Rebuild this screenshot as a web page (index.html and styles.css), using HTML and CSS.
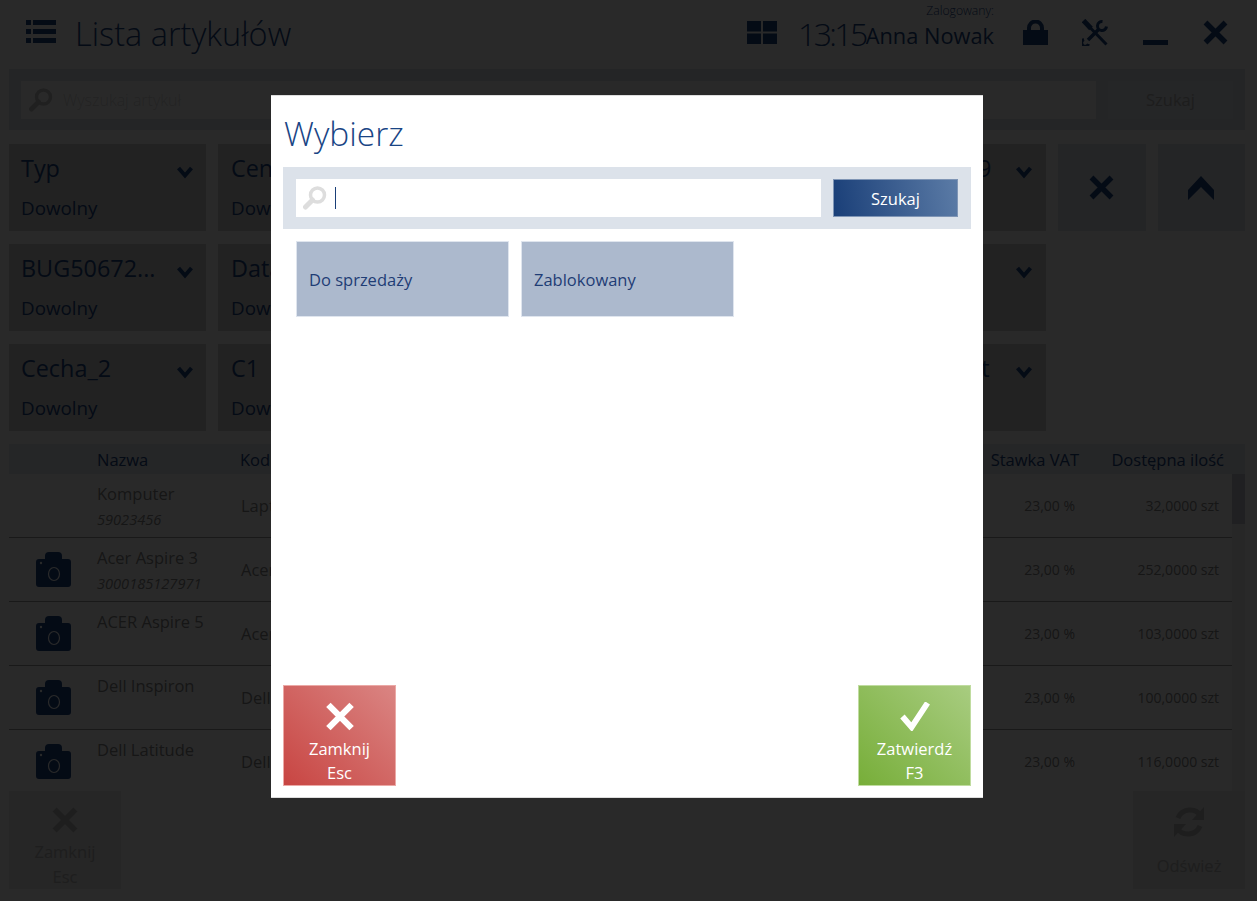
FILE: index.html
```html
<!DOCTYPE html>
<html lang="pl">
  <head>
    <meta charset="UTF-8" />
    <title>Lista artykułów</title>
    <link rel="stylesheet" href="styles.css">
  </head>
  <body>
    <svg class="defs" width="0" height="0">
      <symbol id="i-chevron" viewBox="0 0 16 13"><path d="M1.5 2 8 9.500 14.500 2" fill="none" stroke="currentColor" stroke-width="4"/></symbol>
      <symbol id="i-close" viewBox="0 0 30 30"><path d="M3 3 27 27M27 3 3 27" fill="none" stroke="currentColor" stroke-width="6.500"/></symbol>
      <symbol id="i-camera" viewBox="0 0 35 35"><path fill="currentColor" fill-rule="evenodd" d="M9 7V4a4 4 0 0 1 4-4h9a4 4 0 0 1 4 4v3h6a3 3 0 0 1 3 3v22a3 3 0 0 1-3 3H3a3 3 0 0 1-3-3V10a3 3 0 0 1 3-3Z"/><ellipse cx="18" cy="22" rx="5.500" ry="6.500" fill="none" stroke="#fff" stroke-width="1.200"/><circle cx="5" cy="11" r="1.200" fill="#fff"/></symbol>
    </svg>

    <div class="app">
      <header class="topbar">
        <svg class="menu-icon" width="30" height="23" viewBox="0 0 30 23"><path fill="currentColor" d="M0 0h5v5H0zM7 0h23v5H7zM0 9h5v5H0zM7 9h23v5H7zM0 18h5v5H0zM7 18h23v5H7z"/></svg>
        <h1 class="page-title">Lista artykułów</h1>
        <svg class="grid-icon" width="30" height="23" viewBox="0 0 30 23"><path fill="currentColor" d="M0 0h14v10.500H0zM16 0h14v10.500H16zM0 12.500h14V23H0zM16 12.500h14V23H16z"/></svg>
        <div class="clock">13:15</div>
        <div class="user">
          <span class="user-label">Zalogowany:</span>
          <span class="user-name">Anna Nowak</span>
        </div>
        <svg class="lock-icon" width="25" height="25" viewBox="0 0 25 25"><path fill="currentColor" fill-rule="evenodd" d="M4 10V8a8.500 8.500 0 0 1 17 0v2h4v15H0V10Zm4 0h9V8a4.500 4.500 0 0 0-9 0Z"/></svg>
        <svg class="tools-icon" width="26" height="27" viewBox="0 0 26 27"><path fill="none" stroke="currentColor" stroke-width="5" d="M1.500 1.500 9 9.500"/><path fill="none" stroke="currentColor" stroke-width="3" d="M8 8.500 24.500 25.500"/><path fill="none" stroke="currentColor" stroke-width="3.500" d="M17 10 6 21"/><path fill="none" stroke="currentColor" stroke-width="3" d="M20.500 2.500A4.500 4.500 0 1 0 24.500 7.500M6.500 25A3.500 3.500 0 1 1 2 20.500"/></svg>
        <span class="minimize-icon"></span>
        <svg class="close-icon" width="25" height="25"><use href="#i-close"/></svg>
      </header>

      <div class="searchbar">
        <div class="searchbar-input">
          <svg class="search-icon" width="24" height="24" viewBox="0 0 24 24"><circle cx="14.500" cy="9" r="7" fill="none" stroke="currentColor" stroke-width="3.500"/><path d="M9.500 14 2.500 21" stroke="currentColor" stroke-width="5" stroke-linecap="round"/></svg>
          <span>Wyszukaj artykuł</span>
        </div>
        <div class="searchbar-button">Szukaj</div>
      </div>

      <div class="filters">
        <div class="filter-grid">
          <div class="filter"><span class="filter-name">Typ</span><svg class="chevron"><use href="#i-chevron"/></svg><span class="filter-value">Dowolny</span></div>
          <div class="filter"><span class="filter-name">Cena</span><svg class="chevron"><use href="#i-chevron"/></svg><span class="filter-value">Dowolny</span></div>
          <div class="filter"></div>
          <div class="filter"></div>
          <div class="filter"><span class="filter-name">Atrybut_109</span><svg class="chevron"><use href="#i-chevron"/></svg></div>
          <div class="filter"><span class="filter-name">BUG50672...</span><svg class="chevron"><use href="#i-chevron"/></svg><span class="filter-value">Dowolny</span></div>
          <div class="filter"><span class="filter-name">Data</span><svg class="chevron"><use href="#i-chevron"/></svg><span class="filter-value">Dowolny</span></div>
          <div class="filter"></div>
          <div class="filter"></div>
          <div class="filter"><svg class="chevron"><use href="#i-chevron"/></svg></div>
          <div class="filter"><span class="filter-name">Cecha_2</span><svg class="chevron"><use href="#i-chevron"/></svg><span class="filter-value">Dowolny</span></div>
          <div class="filter"><span class="filter-name">C1</span><svg class="chevron"><use href="#i-chevron"/></svg><span class="filter-value">Dowolny</span></div>
          <div class="filter"></div>
          <div class="filter"></div>
          <div class="filter"><span class="filter-name">Cecha_tekst</span><svg class="chevron"><use href="#i-chevron"/></svg></div>
        </div>
        <div class="filter-actions">
          <div class="filter-action"><svg width="25" height="25"><use href="#i-close"/></svg></div>
          <div class="filter-action"><svg width="26" height="24" viewBox="0 0 26 24"><path fill="currentColor" d="M13 0 26 14v10L13 11 0 24V14Z"/></svg></div>
        </div>
      </div>

      <div class="table-head">
        <span></span>
        <span>Nazwa</span>
        <span>Kod</span>
        <span class="num">Stawka VAT</span>
        <span class="num">Dostępna ilość</span>
      </div>
      <div class="table-body">
        <div class="rows">
          <div class="row">
            <span></span>
            <div class="row-name">Komputer<em>59023456</em></div>
            <span class="row-code">Laptopy</span>
            <span class="row-cell num">23,00 %</span>
            <span class="row-cell num">32,0000 szt</span>
          </div>
          <div class="row">
            <svg class="thumb"><use href="#i-camera"/></svg>
            <div class="row-name">Acer Aspire 3<em>3000185127971</em></div>
            <span class="row-code">Acer</span>
            <span class="row-cell num">23,00 %</span>
            <span class="row-cell num">252,0000 szt</span>
          </div>
          <div class="row">
            <svg class="thumb"><use href="#i-camera"/></svg>
            <div class="row-name">ACER Aspire 5</div>
            <span class="row-code">Acer</span>
            <span class="row-cell num">23,00 %</span>
            <span class="row-cell num">103,0000 szt</span>
          </div>
          <div class="row">
            <svg class="thumb"><use href="#i-camera"/></svg>
            <div class="row-name">Dell Inspiron</div>
            <span class="row-code">Dell</span>
            <span class="row-cell num">23,00 %</span>
            <span class="row-cell num">100,0000 szt</span>
          </div>
          <div class="row">
            <svg class="thumb"><use href="#i-camera"/></svg>
            <div class="row-name">Dell Latitude</div>
            <span class="row-code">Dell</span>
            <span class="row-cell num">23,00 %</span>
            <span class="row-cell num">116,0000 szt</span>
          </div>
        </div>
        <div class="scroll-track"><div class="scroll-thumb"></div></div>
      </div>

      <footer class="footer">
        <div class="page-button">
          <svg width="30" height="30"><use href="#i-close"/></svg>
          <span>Zamknij</span>
          <span>Esc</span>
        </div>
        <div class="page-button">
          <svg class="refresh-icon" width="30" height="30" viewBox="0 0 30 30"><path fill="none" stroke="currentColor" stroke-width="5" d="M27 9A13 13 0 0 0 4 11M3 21a13 13 0 0 0 23-2"/><path fill="currentColor" d="M30 0v13H18ZM0 30V17h12Z"/></svg>
          <span>Odśwież</span>
        </div>
      </footer>
    </div>

    <div class="overlay"></div>

    <div class="dialog">
      <h2 class="dialog-title">Wybierz</h2>
      <div class="dialog-search">
        <div class="dialog-input">
          <svg class="search-icon" width="24" height="24" viewBox="0 0 24 24"><circle cx="14.500" cy="9" r="7" fill="none" stroke="currentColor" stroke-width="3.500"/><path d="M9.500 14 2.500 21" stroke="currentColor" stroke-width="5" stroke-linecap="round"/></svg>
          <span class="caret"></span>
        </div>
        <button class="dialog-search-button">Szukaj</button>
      </div>
      <div class="options">
        <div class="option">Do sprzedaży</div>
        <div class="option">Zablokowany</div>
      </div>
      <div class="dialog-footer">
        <button class="action action-cancel">
          <svg width="30" height="30"><use href="#i-close"/></svg>
          <span>Zamknij</span>
          <span>Esc</span>
        </button>
        <button class="action action-ok">
          <svg width="30" height="30" viewBox="0 0 30 30"><path fill="none" stroke="currentColor" stroke-width="6" d="M2 15 11.500 26 28 1"/></svg>
          <span>Zatwierdź</span>
          <span>F3</span>
        </button>
      </div>
    </div>
  </body>
</html>
```

FILE: styles.css
```css
* {
  box-sizing: border-box;
}
html,
body {
  margin: 0;
  height: 901px;
  overflow: hidden;
}
body {
  font-family: "Open Sans", "Noto Sans", sans-serif;
  color: #1a4585;
  background: #fff;
}
.defs {
  display: block;
  height: 0;
}
.app {
  width: 1257px;
  height: 901px;
  padding: 0 12px 0 9px;
}

/* top bar */
.topbar {
  height: 69px;
  display: flex;
  align-items: center;
}
.menu-icon {
  margin: -6px 0 0 17px;
}
.page-title {
  margin: -2px 0 0 19px;
  width: 216px;
  font-size: 32.500px;
  font-weight: 300;
  white-space: nowrap;
}
.grid-icon {
  margin: -5px 0 0 456px;
}
.clock {
  margin: -2px 0 0 21px;
  font-size: 32px;
  font-weight: 300;
  letter-spacing: -2.600px;
  width: 69px;
  white-space: nowrap;
}
.user {
  display: flex;
  flex-direction: column;
  align-items: flex-end;
  width: 127px;
  margin-top: -14px;
}
.user-label {
  font-size: 12.200px;
  font-weight: 300;
  line-height: 14px;
  margin-bottom: 3px;
}
.user-name {
  font-size: 21.800px;
  line-height: 30px;
  white-space: nowrap;
}
.lock-icon {
  margin: -5px 0 0 29px;
}
.tools-icon {
  margin: -5px 0 0 34px;
}
.minimize-icon {
  width: 25px;
  height: 5px;
  background: currentColor;
  margin: 16px 0 0 35px;
}
.close-icon {
  margin: -5px 0 0 35px;
}

/* article search */
.searchbar {
  height: 61px;
  background: #dce2ea;
  display: flex;
  align-items: center;
  padding: 0 12px;
  gap: 12px;
}
.searchbar-input {
  flex: 1;
  height: 38px;
  background: #fff;
  display: flex;
  align-items: center;
  gap: 10px;
  padding-left: 8px;
  font-size: 16px;
  font-weight: 300;
  color: #d8d8d8;
}
.search-icon {
  color: #ddd;
  flex: none;
}
.searchbar-input .search-icon {
  color: #c8c8c8;
}
.searchbar-button {
  width: 125px;
  height: 38px;
  background: #e4e8ef;
  color: #b4b4b4;
  font-size: 16.500px;
  text-align: center;
  line-height: 38px;
}

/* filters */
.filters {
  margin-top: 14px;
  display: flex;
  gap: 12px;
}
.filter-grid {
  width: 1037px;
  display: grid;
  grid-template-columns: 197px 197px repeat(3, 1fr);
  grid-auto-rows: 87px;
  gap: 13px 12px;
}
.filter {
  position: relative;
  background: #d4d4d4;
  padding: 8px 12px;
  display: flex;
  flex-direction: column;
}
.filter:nth-child(5n + 2) {
  padding-left: 13px;
}
.filter-name {
  font-size: 23.400px;
  line-height: 33px;
  white-space: nowrap;
}
.filter-value {
  font-size: 18.800px;
  line-height: 24px;
  margin-top: 11px;
}
.chevron {
  position: absolute;
  top: 22px;
  left: 168px;
  width: 16px;
  height: 13px;
}
.filter-actions {
  display: flex;
  gap: 12px;
  align-items: flex-start;
}
.filter-action {
  width: 87.500px;
  height: 87px;
  background: #dfe3e9;
  display: flex;
  align-items: center;
  justify-content: center;
}

/* table */
.table-head {
  margin-top: 13px;
  height: 30px;
  background: #e3e8ee;
  display: grid;
  grid-template-columns: 88px 143px 1fr 100px 145px;
  padding-right: 21px;
  align-items: center;
  font-size: 16.500px;
}
.num {
  text-align: right;
  white-space: nowrap;
}
.table-body {
  height: 317px;
  display: flex;
  overflow: hidden;
}
.rows {
  width: 1224px;
}
.row {
  height: 64px;
  border-bottom: 1px solid #9a9a9a;
  display: grid;
  grid-template-columns: 88px 144px 1fr 90px 144px;
  padding-right: 13px;
  color: #888;
}
.thumb {
  width: 35px;
  height: 35px;
  margin: 14px 0 0 27px;
  color: #1a4585;
}
.row-name {
  font-size: 16.500px;
  line-height: 22px;
  padding-top: 9px;
  display: flex;
  flex-direction: column;
}
.row-name em {
  font-size: 14.600px;
  line-height: 20px;
  margin-top: 4px;
}
.row-code {
  align-self: center;
  font-size: 16.500px;
}
.row-cell {
  align-self: center;
  font-size: 14px;
}
.scroll-track {
  width: 13px;
  background: #f2f2f2;
}
.scroll-thumb {
  height: 50px;
  background: #c4c8d2;
}

/* page footer */
.footer {
  display: flex;
  justify-content: space-between;
}
.page-button {
  width: 112px;
  height: 98px;
  background: #e8e8e8;
  display: flex;
  flex-direction: column;
  align-items: center;
  color: #b8b8b8;
  font-size: 16.500px;
  line-height: 25px;
  padding-top: 16px;
}
.page-button svg {
  margin-bottom: 6px;
}
.page-button .refresh-icon {
  margin-bottom: 16px;
}

/* dimmed layer and dialog */
.overlay {
  position: fixed;
  inset: 0;
  background: rgba(0, 0, 0, 0.84);
}
.dialog {
  position: fixed;
  left: 271px;
  top: 95px;
  width: 712px;
  height: 703px;
  background: #fff;
  border-top: 1px solid #ddd;
  border-bottom: 1px solid #ddd;
  padding: 0 12px 11px;
  display: flex;
  flex-direction: column;
}
.dialog-title {
  margin: 12px 0 0 1px;
  height: 59px;
  font-size: 33.500px;
  font-weight: 300;
  line-height: 50px;
}
.dialog-search {
  height: 62px;
  background: #dce2ea;
  display: flex;
  align-items: center;
  padding: 0 13px;
  gap: 12px;
}
.dialog-input {
  width: 525px;
  height: 38px;
  background: #fff;
  display: flex;
  align-items: center;
  padding-left: 7px;
}
.caret {
  width: 1px;
  height: 22px;
  background: #1a3f78;
  margin-left: 8px;
}
.dialog-search-button {
  width: 125px;
  height: 38px;
  border: 1px solid #7f95b5;
  background: linear-gradient(80deg, #1a3f78, #5b7ba6);
  color: #fff;
  font-family: inherit;
  font-size: 16.500px;
  padding: 0;
}
.options {
  margin: 12px 0 0 13px;
  display: flex;
  gap: 12px;
}
.option {
  width: 213px;
  height: 76px;
  background: #acb9cd;
  border: 1px solid #dfe5ee;
  display: flex;
  align-items: center;
  padding-left: 12px;
  font-size: 16.500px;
  color: #1f3d75;
}
.dialog-footer {
  margin-top: auto;
  display: flex;
  justify-content: space-between;
}
.action {
  width: 113px;
  height: 101px;
  color: #fff;
  display: flex;
  flex-direction: column;
  align-items: center;
  padding: 16px 0 0;
  font-family: inherit;
  font-size: 16.500px;
  line-height: 24px;
}
.action svg {
  margin-bottom: 6px;
}
.action-cancel {
  border: 1px solid #eba9a6;
  background: linear-gradient(45deg, #c84542, #da8583);
}
.action-ok {
  border: 1px solid #c0dca0;
  background: linear-gradient(45deg, #77ae39, #a8cc80);
}
```
